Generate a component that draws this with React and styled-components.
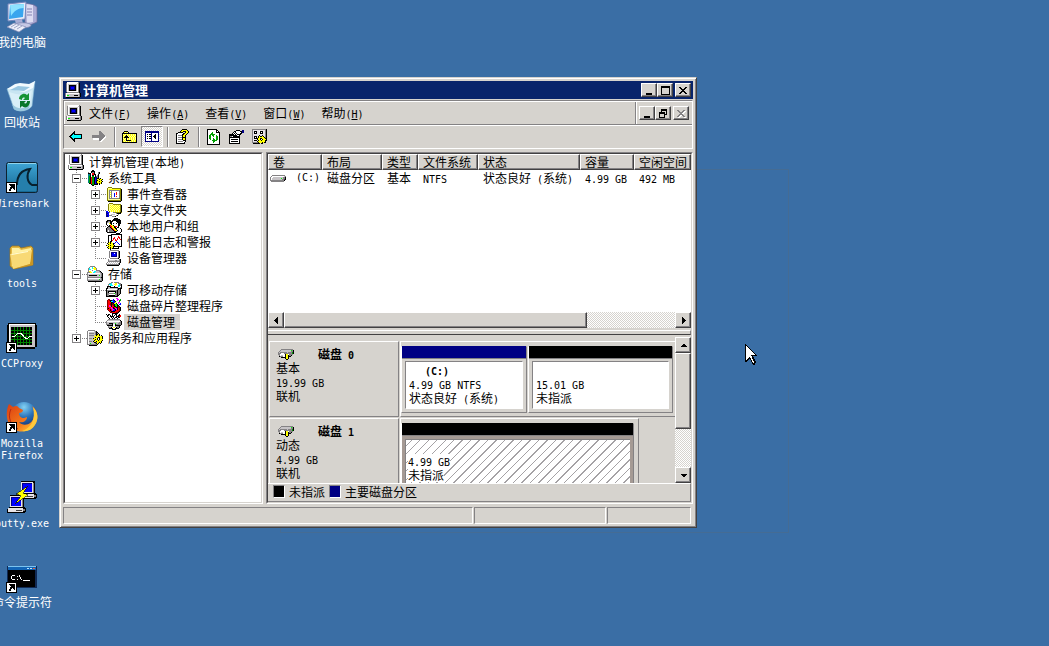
import React from "react";
import styled, { createGlobalStyle, css } from "styled-components";

const c = {
  face: "#d6d3ce",
  light: "#ffffff",
  shadow: "#848284",
  dark: "#424142",
  title: "#08246b",
  navy: "#000084",
  desk: "#3a6ea5",
};

const Global = createGlobalStyle`
  * { box-sizing: border-box; }
  body {
    margin: 0;
    background: ${c.desk};
    color: #000;
    font: 12px/16px "Noto Sans CJK SC", "Liberation Sans", sans-serif;
  }
  button { font: inherit; color: inherit; padding: 0; margin: 0; }
`;

const raised = css`
  border: 1px solid;
  border-color: ${c.light} ${c.dark} ${c.dark} ${c.light};
  box-shadow: inset -1px -1px 0 ${c.shadow};
`;
const sunken = css`
  border: 1px solid;
  border-color: ${c.shadow} ${c.light} ${c.light} ${c.shadow};
`;
const dither = css`
  background: repeating-conic-gradient(#fff 0 25%, ${c.face} 0 50%) 0 0 / 2px 2px;
`;

const Half = styled.span`
  font-family: "DejaVu Sans Mono", monospace;
  font-size: 10px;
  line-height: 0;
  white-space: pre;
`;

function T({ children }) {
  return children
    .split(/([\x20-\x7e]+)/)
    .filter(Boolean)
    .map((s, i) => (/^[\x20-\x7e]/.test(s) ? <Half key={i}>{s}</Half> : s));
}

/* ---------- pixel sprites ---------- */
const ink = {
  k: "#000", w: "#fff", g: "#848284", s: "#c6c3c6", l: "#e7e3e7", b: "#0000ff", n: "#000084",
  y: "#ffff00", Y: "#ffff9c", o: "#848200", c: "#00ffff", t: "#008284", r: "#ff0000",
  R: "#840000", e: "#00a000", G: "#00ff00", m: "#ff00ff", d: "#424142",
};

const Art = styled.svg`
  display: block;
  flex: none;
  overflow: visible;
`;

function Sprite({ rows }) {
  const rects = [];
  rows.forEach((row, y) => {
    let x = 0;
    while (x < row.length) {
      const ch = row[x];
      let n = 1;
      while (row[x + n] === ch) n += 1;
      if (ink[ch]) rects.push(<rect key={`${x}-${y}`} x={x} y={y} width={n} height="1" fill={ink[ch]} />);
      x += n;
    }
  });
  const w = Math.max(...rows.map((r) => r.length));
  return (
    <Art width={w} height={rows.length} shapeRendering="crispEdges" aria-hidden="true">
      {rects}
    </Art>
  );
}

const art = {
  computer: [
    "..wwwwwwwwwwwg..",
    ".gwwwwwwwwwwsgk.",
    ".gwssssssssswgk.",
    ".gwskkkkkkkswgk.",
    ".gwsknnnnnkswgk.",
    ".gwsknbbbnkswgk.",
    ".gwsknbbbnkswgk.",
    ".gwsknnnnnkswgk.",
    ".gwskkkkkkkswgk.",
    ".gwwwwwwwwwwwgk.",
    "..ggggggggggggk.",
    "gwwwwwwwwwwwwwgk",
    "gwssssssssssssgk",
    "gwGGssssskkkksgk",
    "gwssssssssssssgk",
    ".kkkkkkkkkkkkkk.",
  ],
  tools: [
    "..ww.kk.........",
    ".wwwkkkk..ww....",
    ".gw.kggk..wgk...",
    ".kkk.rrk.wwgk...",
    ".ttk.rrkkwwk....",
    ".ttk.kk.kwgk....",
    ".tek.ee.kggk....",
    ".tekreeknngk....",
    ".tekreekbnkkyk..",
    ".tekreekbnyykyyk",
    ".tekreekbnkyyyk.",
    ".tekreekbkyykyyk",
    ".tekreekbkyyyyk.",
    "..kkreekbnkykyk.",
    "....keekkkk.k...",
    ".....kk.........",
  ],
  events: [
    "................",
    "..oooo..........",
    ".oYYYYooooooooo.",
    ".oYyyyyyyyyyyyok",
    ".oYgggggggggggok",
    ".oYgwgwwwwwwwgok",
    ".oYgygwwwwrwwgok",
    ".oYgwgwwbwrwwgok",
    ".oYgygwwbwrwwgok",
    ".oYgwgwwbwwwwgok",
    ".oYgygwwbwrwwgok",
    ".oYgwgwwwwwwwgok",
    ".oYggggggggggook",
    ".oYYYYYYYYYYYYok",
    ".ooooooooooooook",
    "..kkkkkkkkkkkkk.",
  ],
  shared: [
    "................",
    "...oooo.........",
    "..oYYYYoooooooo.",
    "..oYyYyYyYyYyYok",
    "..oYYyYyYyYyYyok",
    "..oYyYyYyYyYyYok",
    "..oYYyYyYyYyYyok",
    "..oYyYyYyYyYyYok",
    "..oYYyYyYyYyYyok",
    "bb.oYyYyYyYyYyok",
    "nbbgwwwggoooooko",
    "nnbwwwwwwwgkkkk.",
    "nbbwwsssswwwg...",
    "nnbgggwwwwgk....",
    "nnb...gggk......",
    "................",
  ],
  users: [
    "........kkkk....",
    ".......kkkkkkk..",
    ".kkkk.kkkkkkkkk.",
    "kkggkkkwwwkkkkk.",
    "kgsskkwwwwwkkkk.",
    "kwwykkwkwwkwkkk.",
    "kwwwykwwwwwwkk..",
    ".kwkryykwwwwkk..",
    "..kkrryykrrwk...",
    ".kggkryykkwkk...",
    "kggggkryykkwwwk.",
    "kgggggkryykwwwwk",
    "kgwggggkryykwwwk",
    "kgwgggggkkkwwwwk",
    ".kkkkkkkkkwwwwk.",
    "..........kkkk..",
  ],
  perf: [
    ".....kkkkkkkkkkk",
    "..kkkkwwwwwwwwwk",
    "..kwwkwwwwwwrwwk",
    "..kwwkwwrwwwrrwk",
    "..kwwkwrrwwrwrwk",
    "..kwwkwrwrwrwwrk",
    "..kwwkrwwrrwwwwk",
    "..kwkkwwwwbwwwwk",
    "..kykywwwbwbwwwk",
    ".kyykyykbwwwbwwk",
    "..kyyyykwwwwwbwk",
    "kyyykyyykwwwwwwk",
    "..kyyyykkkkkkkkk",
    ".kyykyykwwwwk...",
    "..kykykkkkkkk...",
    "....k...........",
  ],
  devices: [
    "....ggggggggg...",
    "...gwwwwwwwwgk..",
    "...gwnnnnnnwgk..",
    "...gwnbbwbnwgk..",
    "...gwnbbbbnwgk..",
    "...gwnbbbbnwgk..",
    "...gwnnnnnnwgk..",
    "...gwwwwwwwwgk..",
    "....ggggggggk...",
    "..gwwwwwwwwwwgk.",
    "..gssssssggssgk.",
    "..ggggggggggggk.",
    ".gwswswswswswgk.",
    "gwswswswswswgk..",
    "gggggggggggggk..",
    ".kkkkkkkkkkkk...",
  ],
  storage: [
    "...ggggg........",
    "..gwwcwyg.......",
    ".gcwwcyyyg......",
    ".gccwwwyyg......",
    ".gwwwgwwwgggg...",
    ".gyywwwccsssgk..",
    "gggyywccsssssgk.",
    "gwwwwwwwwwwwwsgk",
    "gsssssssssssssgk",
    "gskkkkkkkkssGsgk",
    "gsssssssssssssgk",
    "ggggggggggggggkk",
    "gwwwwwwwwwwwwsgk",
    "gsssssssssssGsgk",
    "gggggggggggggggk",
    ".kkkkkkkkkkkkkk.",
  ],
  removable: [
    ".....ggwggggg...",
    "...ggcwwwyywggg.",
    "..gcccwwyyywwcgk",
    "..gwcccwwywwccgk",
    ".kkkkwwwkwwwccwk",
    ".ksskkkkkkkkwwgk",
    "kksssssssssgkkkk",
    "kwwwwwwwwwwgkgk.",
    "kggggggggggkggk.",
    "kgkkkkkkkkgkggk.",
    "kgkwwwwwwkgkggk.",
    "kgggggggGggkggk.",
    "kggwwwwwwggkgk..",
    "kggkkkkkkggkk...",
    "kkkkkkkkkkkk....",
    "................",
  ],
  defrag: [
    "..........mm....",
    "..RR...b...mm.e.",
    ".RrRkkbbk..m.ee.",
    ".RrrkccbbkY..e..",
    ".RrrrkkbbyY.mm..",
    ".RrrRkRkyyk.m.b.",
    ".RrrRkRRkGGk.bb.",
    ".RrmrkrRkGGkk...",
    ".RrmmkrrkkGkRk..",
    ".RrrrmrkrrkkRRk.",
    ".RkrrmmkkmmkrRk.",
    ".RrrkrmmbkmkrRk.",
    "..RrkrmbbkrrrRk.",
    "...RrkkkkrrrRk..",
    "....RRrrrrRRk...",
    "......kkkkkk....",
  ],
  diskmgmt: [
    "k.kk..k..kk..kww",
    "wkkwk.k.kwk.kkrw",
    ".kwwkkkkwwkkkrr.",
    "..kwwkwkwkkwkk..",
    "...kwwkwkwwk....",
    "..gggggggggggg..",
    ".gssssssssssssk.",
    "gwwwwwwwwwwwwwgk",
    "gssssssssssssggk",
    "gsskkkkssGssgggk",
    "ggggggkwwkgggggk",
    ".kkkkkkwwkkkkkk.",
    "..gsssgwwgsggk..",
    "..gggkwyywkggk..",
    "...kkkkwwkkkk...",
    "......kkkk......",
  ],
  services: [
    ".ggggggg........",
    "gwwwwwwsgk......",
    "gwssssssgkk.....",
    "gwgggggsgkgk....",
    "gwssssssgkkyk...",
    "gwgggggsykyyk.k.",
    "gwsssssyyyyyyyyk",
    "gwsssssskyykkyyk",
    "gwgggskyyyk.kyyk",
    "gwssssyykyk.kyyy",
    "gwssssskyyykyyyk",
    "gwgggskyykyyyyk.",
    "gwssssskkgyykyk.",
    "gwsGssssgkyk.k..",
    "ggggggggggk.....",
    "..kkkkkkkk......",
  ],
  drive: [
    "..ggggggggggggg.",
    ".gwwwwwwwwwwwwsg",
    "gwwssssssssssggk",
    "gwsssssssssGsggk",
    "gwssssssssssggdk",
    "ggggggggggggggk.",
    ".ggggggggggggg..",
  ],
  disk: [
    "...gggggggggggg.",
    "..gssssssssssGgk",
    ".gsssssssssssggk",
    "gsgggggggsggggek",
    "gggwwwggggggggek",
    "ggwwwwwkyywgggg.",
    ".gwsswwkyykggk..",
    ".kgggwwkyykkk...",
    "...kkkkkyyk.....",
    ".......kyyk.....",
    "........kk......",
  ],
  up: [
    "..kkkk..........",
    ".kyYyYk.........",
    "kkkkkkkkkkkkkkk.",
    "kYyYyYyYyYyYyYk.",
    "kyYykYyYyYyYyYk.",
    "kYykkkYyYyYyYyk.",
    "kykkkkkYyYyYyYk.",
    "kYyYkYyYyYyYyYk.",
    "kyYykYyYyYyYyYk.",
    "kYyYkkkkkyYyYyk.",
    "kyYyYyYyYyYyYyk.",
    "kkkkkkkkkkkkkkk.",
  ],
  pane: [
    "nnnnnnnnnnnnnn",
    "nnnnnnnnnnnnnn",
    "nwwwwwnwwwwwwn",
    "nwkwkknwwwkwwn",
    "nwwwwwnwwkkwwn",
    "nwkwkknwkkkwwn",
    "nwwwwwnwwkkwwn",
    "nwkwkknwwwkwwn",
    "nwwwwwnwwwwwwn",
    "nwwwwwnwwwwwwn",
    "nnnnnnnnnnnnnn",
  ],
  help: [
    "......kkkkk...",
    ".....kyyyyyk..",
    "....kyykkkyyk.",
    "..kkkkk..kyyk.",
    "kkwwwwwkkyyk..",
    "kwwwwwkkyyk...",
    "kwggggkyyk....",
    "kwwwwwkyyk....",
    "kwggggkkkk....",
    "kwwwwwkyyk....",
    "kwggggkyyk....",
    "kwwwwwwkkk....",
    "kwgggggwwk....",
    "kwwwwwwwk.....",
    "kkkkkkkkk.....",
  ],
  refresh: [
    "kkkkkkkkkk...",
    "kwwwwwwwwkk..",
    "kwwwwwwwwkwk.",
    "kwwwwewwwkkkk",
    "kwwweewwwwwwk",
    "kwweeeeewwwwk",
    "kweeweewwewwk",
    "kweewwewweewk",
    "kweewwwwweewk",
    "kweewwewweewk",
    "kwwewweeweewk",
    "kwwwweeeeewwk",
    "kwwwwweewwwwk",
    "kwwwwwewwwwwk",
    "kwwwwwwwwwwwk",
    "kkkkkkkkkkkkk",
  ],
  props: [
    ".......kkkk..nn",
    ".....kkwwwwkknn",
    "....kwkwwwwwknn",
    "...kwkwkwwwkk..",
    "kkkkkwkwkkkk...",
    "kkkkkkkkwwk....",
    "kggwkkkkkkk....",
    "kkkkkkkkkkk....",
    "kwwwwwwwwwk....",
    "kwkkkkkkkwk....",
    "kwwwwwwwwwk....",
    "kwkkkkkkkwk....",
    "kwwwwwwwwwk....",
    "kkkkkkkkkkk....",
  ],
  settings: [
    "ggggggggggggggk.",
    "gllllllllllllgk.",
    "glkkkllwkkkllgk.",
    "glkwklllkwkllgk.",
    "glkkklllkkkllgk.",
    "gllllllllllllgk.",
    "gllllllkllkllgk.",
    "glkkklkykkyklgk.",
    "glkwklkyyyyykgk.",
    "glkkkkyykkyyykk.",
    "gllllkyykwkyyyk.",
    "glkkklkyykyyykk.",
    "gllllkyyyyyyyk..",
    "ggggggkyyykykk..",
    ".kkkkkkk.kk.....",
  ],
};

/* ---------- desktop icons ---------- */
const Shortcut = () => (
  <g shapeRendering="crispEdges">
    <rect x="0" y="21" width="11" height="11" fill="#000" />
    <rect x="1" y="22" width="9" height="9" fill="#fff" />
    <path d="M3 23h6v6h-1v-1h-1v-1h-1v1h-1v2H3v-2h1v-2h1v-1h-1v-1H3z" fill="#000" />
  </g>
);

const Pc = () => (
  <Art width="32" height="32" aria-hidden="true">
    <path d="M19 2l9 2 3 2v15l-7 3-5-2z" fill="#a9a9d2" stroke="#6b6b9c" strokeWidth=".7" />
    <path d="M20 3l7 1v17l-6 1z" fill="#dcdcf2" />
    <path d="M21 8h5M21 11h5M21 14h5" stroke="#8080b0" />
    <path d="M2 3l18-2-1 17-17 2z" fill="#e9edfa" stroke="#7587bb" />
    <path d="M4 4l14-1-1 13-14 2z" fill="#39a5ee" />
    <path d="M4 4l14-1v4c-6 0-10 3-13 8z" fill="#8de3ff" />
    <path d="M9 19l7-1 1 5-7 1z" fill="#a8aed6" />
    <path d="M8 24c2-3 16-3 17 0s-15 5-17 0z" fill="#c6c9e6" stroke="#7780aa" strokeWidth=".7" />
    <path d="M1 26l7-4 12 4-7 5z" fill="#eceef9" stroke="#858db6" strokeWidth=".7" />
    <path d="M5 26l5-3M8 27l5-3M11 28l5-3" stroke="#a2a9c9" />
  </Art>
);

const Bin = () => (
  <Art width="32" height="32" aria-hidden="true">
    <path d="M1 8L14 4l10 2 5-6-3 25c-4 6-14 6-18 3z" fill="#c8e5f2" stroke="#80b2d0" strokeWidth=".6" />
    <path d="M1 8l8-5 5-1 9 1 6-3-2 7-9 4-9-2z" fill="#f2fbff" />
    <path d="M4 9l8-4 12 1-6 4z" fill="#98c7e2" />
    <path d="M3 11l7 2 8 1 8-5-2 15c-5 6-13 5-16 2z" fill="#d9eff8" />
    <path d="M6 23c5 6 15 5 18 0l-1 4c-4 4-12 4-15 1z" fill="#9ac8de" />
    <path d="M13 18c0-4 5-7 8-4l2-2v7h-6l2-2c-2-1-3 0-3 2z" fill="#159335" />
    <path d="M24 20c0 6-5 8-8 5l-2 2v-7h6l-2 2c2 1 3 0 3-2z" fill="#08772a" />
  </Art>
);

const Shark = () => (
  <Art width="32" height="32" aria-hidden="true">
    <defs>
      <linearGradient id="sea" x1="0" y1="0" x2="0" y2="1">
        <stop offset="0" stopColor="#3fa6d6" />
        <stop offset="1" stopColor="#156691" />
      </linearGradient>
    </defs>
    <rect x=".5" y="1.500" width="31" height="30" rx="2" fill="url(#sea)" stroke="#0d2230" />
    <path d="M2 2.500h28" stroke="#91d4ec" />
    <path d="M11 24c0-9 4-15 13-16-4 6-3 13 2 16h4v6H11z" fill="#257fac" />
    <path d="M11 24c0-9 4-15 13-16-4 6-3 13 2 16h5" fill="none" stroke="#07202e" strokeWidth="2" />
    <Shortcut />
  </Art>
);

const Folder = () => (
  <Art width="32" height="32" aria-hidden="true">
    <path d="M4 7l2-2h7l2 2 10-2 2 2v17L8 28l-4-3z" fill="#e4b842" stroke="#9b7420" strokeWidth=".8" />
    <path d="M6 7h7l2 2 10-2v14L6 25z" fill="#fff0a2" />
    <path d="M4 13l18-3 4-1-2 14L7 28z" fill="#f8d975" />
    <path d="M5 13l17-3v1L6 14z" fill="#fffbd2" />
    <path d="M7 28l17-5 2-13 1-2v16z" fill="#c99523" />
  </Art>
);

const Proxy = () => (
  <Art width="32" height="32" shapeRendering="crispEdges" aria-hidden="true">
    <path d="M2 2h28v2h1v22h-2v2H3v-2H1V4h1z" fill="#000" />
    <path d="M3 3h26v22H3z" fill="#fff" />
    <path d="M4 4h25v22H4z" fill="#c6c3c6" />
    <path d="M5 6h21v18H5z" fill="#000" />
    <path d="M8 6v18M11 6v18M14 6v18M17 6v18M20 6v18M23 6v18M5 9h21M5 12h21M5 15h21M5 18h21M5 21h21" stroke="#008200" />
    <path d="M6 15h3l3-3h3l3 4 3 2 3-3h2" fill="none" stroke="#fff" />
    <Shortcut />
  </Art>
);

const Firefox = () => (
  <Art width="32" height="32" aria-hidden="true">
    <defs>
      <radialGradient id="globe" cx=".5" cy=".2" r=".8">
        <stop offset="0" stopColor="#83d2f4" />
        <stop offset=".5" stopColor="#276fb7" />
        <stop offset="1" stopColor="#14306c" />
      </radialGradient>
      <linearGradient id="fur" x1="0" y1="0" x2="1" y2="1">
        <stop offset="0" stopColor="#d93c13" />
        <stop offset=".6" stopColor="#f57a19" />
        <stop offset="1" stopColor="#ffd53d" />
      </linearGradient>
    </defs>
    <circle cx="18" cy="14" r="13" fill="url(#globe)" />
    <path d="M3 3l4 3c3-2 5-1 6 1l4 2c0 2-2 3-4 3 0 3 2 5 5 5l3-1c0 4-4 6-8 5 4 5 14 3 15-6 1-4-1-8-2-10 7 5 7 15 1 21-7 7-20 6-24-3C0 17 0 9 3 3z" fill="url(#fur)" />
    <path d="M27 6c5 5 6 12 2 18-3 5-8 7-13 6 9-3 14-11 11-24z" fill="#ffc93a" />
    <path d="M5 8c-4 8 0 17 7 20" fill="none" stroke="#b52a13" />
    <Shortcut />
  </Art>
);

const Terminal = ({ x, y }) => (
  <g transform={`translate(${x} ${y})`}>
    <path d="M2 0h14l1 1v11h1l1 2v3l-2 1H0v-4l3-2V1z" fill="#000" />
    <path d="M3 1h12v11H3zM1 13h15v4H1z" fill="#e7e3e7" />
    <path d="M15 2h1v10h-1zM16 14h2v2h-2z" fill="#848284" />
    <path d="M4 2h10v9H4z" fill="#000084" />
    <path d="M5 3h9v8H5z" fill="#0000ff" />
    <path d="M9 15h6v1H9z" fill="#424142" />
  </g>
);

const Putty = () => (
  <Art width="32" height="32" shapeRendering="crispEdges" aria-hidden="true">
    <Terminal x="12" y="0" />
    <Terminal x="1" y="14" />
    <path d="M22 5l-12 8 5 2-6 8 13-9-5-2z" fill="#ff0" stroke="#000" strokeWidth=".6" />
  </Art>
);

const Cmd = () => (
  <Art width="32" height="32" shapeRendering="crispEdges" aria-hidden="true">
    <path d="M1 5h30v22H1z" fill="#102a55" />
    <path d="M2 5h28v4H2z" fill="#1264b5" />
    <path d="M2 5h28v1H2z" fill="#7bc3ef" />
    <path d="M21 7h2v1h-2zM24 7h2v1h-2z" fill="#b9e1ff" />
    <path d="M27 7h2v1h-2z" fill="#ef5d31" />
    <path d="M2 9h27v17H2z" fill="#000" />
    <path d="M6 14h3v1H6zM5 15h1v3H5zM6 18h3v1H6zM11 15h1v1h-1zM11 18h1v1h-1zM13 14h1v2h-1zM14 16h1v2h-1zM15 18h1v1h-1zM17 19h7v1h-7z" fill="#fff" />
    <Shortcut />
  </Art>
);

const Desktop = styled.main`
  position: relative;
  min-height: 100vh;
  overflow: hidden;
`;
const IconColumn = styled.nav`
  display: grid;
  grid-auto-rows: 80px;
  width: 88px;
  margin-left: -22px;
`;
const DesktopIcon = styled.button`
  display: flex;
  flex-direction: column;
  align-items: center;
  gap: 3px;
  padding-top: 1px;
  border: 0;
  background: none;
  color: #fff;
  line-height: 12px;
  text-align: center;
`;
const IconLabel = styled.span`
  display: block;
`;
const IconLine = styled.span`
  display: block;
`;

/* ---------- window ---------- */
const DragOutline = styled.div`
  position: absolute;
  left: 280px;
  top: 169px;
  width: 509px;
  height: 364px;
  border: 1px solid #456c94;
`;
const Frame = styled.section`
  position: absolute;
  left: 59px;
  top: 77px;
  width: 638px;
  padding: 3px;
  background: ${c.face};
  border: 1px solid;
  border-color: ${c.face} ${c.dark} ${c.dark} ${c.face};
  box-shadow: inset 1px 1px 0 ${c.light}, inset -1px -1px 0 ${c.shadow};
`;
const TitleBar = styled.header`
  display: flex;
  align-items: center;
  gap: 2px;
  height: 18px;
  padding: 0 2px;
  background: ${c.title};
  color: #fff;
`;
const TitleText = styled.h1`
  flex: 1;
  margin: 0;
  font-size: 13px;
  font-weight: 700;
  line-height: 16px;
`;
const Buttons = styled.div`
  display: flex;
  button:last-child { margin-left: 2px; }
`;
const CaptionButton = styled.button`
  ${raised}
  display: grid;
  place-items: center;
  width: 16px;
  height: 14px;
  background: ${c.face};
  color: ${(p) => (p.disabled ? c.shadow : "#000")};
`;
const Rebar = styled.div`
  margin-top: 1px;
  ${sunken}
`;
const MenuBar = styled.nav`
  display: flex;
  align-items: center;
  height: 23px;
  padding: 0 3px 0 1px;
  border-left: 1px solid ${c.light};
  border-top: 1px solid ${c.light};
`;
const Menus = styled.div`
  display: flex;
  flex: 1;
  gap: 16px;
  padding-left: 7px;
`;
const MenuButton = styled.button`
  border: 0;
  background: none;
  line-height: 16px;
`;
const MdiControls = styled.div`
  display: flex;
  align-items: center;
  align-self: stretch;
  padding-left: 3px;
  border-left: 1px solid ${c.shadow};
  box-shadow: inset 1px 0 0 ${c.light};
`;
const ToolBar = styled.div`
  display: flex;
  align-items: center;
  height: 24px;
  border-top: 1px solid ${c.shadow};
  box-shadow: inset 0 1px 0 ${c.light};
`;
const ToolButton = styled.button`
  display: grid;
  place-items: center;
  width: ${(p) => (p.$pressed ? 22 : 23)}px;
  height: 21px;
  border: 0;
  background: none;
  ${(p) => p.$pressed && css`${dither} ${sunken}`}
`;
const ToolSep = styled.span`
  width: 2px;
  height: 20px;
  margin: 0 2px 0 4px;
  border-left: 1px solid ${c.shadow};
  border-right: 1px solid ${c.light};
`;
const Body = styled.div`
  display: grid;
  grid-template-columns: 200px minmax(0, 1fr);
  gap: 3px;
  margin: 3px 0;
`;
const Inset = styled.div`
  min-width: 0;
  ${sunken}
`;
const InsetInner = styled.div`
  height: 100%;
  border: 1px solid;
  border-color: ${c.dark} ${c.face} ${c.face} ${c.dark};
  background: ${(p) => p.$bg};
`;

/* ---------- tree ---------- */
const TreeList = styled.ul`
  margin: 0;
  padding: 0 0 0 3px;
  list-style: none;
`;
const TreeRow = styled.li`
  display: flex;
  align-items: center;
  height: 16px;
`;
const Guide = styled.span`
  flex: none;
  width: 19px;
  height: 16px;
  background:
    ${(p) => (p.$v ? "repeating-linear-gradient(#848284 0 1px, transparent 1px 2px) 8px 0 / 1px" : "linear-gradient(transparent, transparent) 0 0 / 0")} ${(p) => (p.$v === "end" ? "8px" : "16px")} no-repeat,
    ${(p) => (p.$h ? "repeating-linear-gradient(90deg, #848284 0 1px, transparent 1px 2px) 8px 8px / 11px 1px" : "linear-gradient(transparent, transparent) 0 0 / 0 0")} no-repeat;
`;
const Expander = styled.button`
  display: block;
  width: 9px;
  height: 9px;
  margin: 4px 0 0 4px;
  border: 1px solid ${c.shadow};
  background: #fff;
  svg { margin: 1px; }
`;
const TreeLabel = styled.span`
  margin-left: 2px;
  padding: 0 5px 0 3px;
  line-height: 16px;
  white-space: nowrap;
  background: ${(p) => (p.$selected ? c.face : "none")};
`;

const Sign = ({ open }) => (
  <Art width="5" height="5" shapeRendering="crispEdges" aria-hidden="true">
    <path d={open ? "M0 2h5v1H0z" : "M0 2h5v1H0zM2 0h1v5H2z"} />
  </Art>
);

const tree = [
  { g: [], icon: "computer", text: "计算机管理(本地)" },
  { g: ["full"], box: "-", icon: "tools", text: "系统工具" },
  { g: ["full", "full"], box: "+", icon: "events", text: "事件查看器" },
  { g: ["full", "full"], box: "+", icon: "shared", text: "共享文件夹" },
  { g: ["full", "full"], box: "+", icon: "users", text: "本地用户和组" },
  { g: ["full", "full"], box: "+", icon: "perf", text: "性能日志和警报" },
  { g: ["full", "end"], icon: "devices", text: "设备管理器" },
  { g: ["full"], box: "-", icon: "storage", text: "存储" },
  { g: ["full", "full"], box: "+", icon: "removable", text: "可移动存储" },
  { g: ["full", "full"], icon: "defrag", text: "磁盘碎片整理程序" },
  { g: ["full", "end"], icon: "diskmgmt", text: "磁盘管理", selected: true },
  { g: ["end"], box: "+", icon: "services", text: "服务和应用程序" },
];

/* ---------- volume list ---------- */
const ListArea = styled.div`
  height: 158px;
  overflow: hidden;
  background: #fff;
`;
const Volumes = styled.table`
  width: 100%;
  table-layout: fixed;
  border-collapse: separate;
  border-spacing: 0;
  th, td {
    padding: 0 0 0 5px;
    text-align: left;
    font-weight: 400;
    line-height: 14px;
    white-space: nowrap;
    overflow: hidden;
  }
  th {
    ${raised}
    height: 16px;
    padding-left: 4px;
    background: ${c.face};
  }
  td { height: 16px; }
  td:first-child { padding-left: 2px; }
`;
const VolumeName = styled.span`
  display: flex;
  align-items: center;
  gap: 4px;
`;
const columns = [
  ["卷", 54], ["布局", 60], ["类型", 36], ["文件系统", 60], ["状态", 102], ["容量", 54], ["空闲空间"],
];
const Col = styled.col`
  width: ${(p) => (p.$w ? `${p.$w}px` : "auto")};
`;

/* ---------- scroll bars ---------- */
const Scroll = styled.div`
  display: flex;
  flex-direction: ${(p) => (p.$vertical ? "column" : "row")};
  flex: none;
  ${(p) => (p.$vertical ? "width: 16px;" : "height: 16px;")}
  ${dither}
`;
const ScrollButton = styled.button`
  ${raised}
  display: grid;
  place-items: center;
  flex: none;
  width: 16px;
  height: 16px;
  background: ${c.face};
`;
const Thumb = styled.div`
  ${raised}
  flex: 0 0 ${(p) => p.$size};
  background: ${c.face};
`;
const Fill = styled.div`
  flex: 1;
`;
const arrows = {
  left: "M5 0v7L1 4V3z",
  right: "M2 0v7l4-3V3z",
  up: "M0 5h7L4 2H3z",
  down: "M0 2h7L4 5H3z",
};
const Arrow = ({ to }) => (
  <Art width="7" height="7" shapeRendering="crispEdges" aria-hidden="true">
    <path d={arrows[to]} />
  </Art>
);

const Splitter = styled.div`
  height: 5px;
  margin: 2px 0;
  border-top: 1px solid ${c.light};
  border-bottom: 1px solid ${c.dark};
  border-right: 1px solid ${c.shadow};
`;

/* ---------- disk map ---------- */
const MapArea = styled.div`
  display: flex;
  height: 146px;
`;
const Disks = styled.div`
  display: flex;
  flex-direction: column;
  flex: 1;
  gap: 1px;
  min-width: 0;
  padding: 4px 0 0 1px;
  overflow: hidden;
`;
const Disk = styled.div`
  display: flex;
  flex: none;
  gap: 1px;
  height: 76px;
`;
const DiskInfo = styled.div`
  flex: none;
  width: 130px;
  padding: 5px 6px;
  border: 1px solid;
  border-color: ${c.light} ${c.shadow} ${c.shadow} ${c.light};
  line-height: 14px;
`;
const DiskName = styled.div`
  display: flex;
  align-items: center;
  gap: 24px;
  padding-left: 2px;
  font-weight: 700;
`;
const DiskParts = styled.div`
  display: flex;
  flex: ${(p) => (p.$open ? "1" : "none")};
  gap: 1px;
  padding: 4px ${(p) => (p.$open ? 2 : 4)}px 3px 0;
  border: solid;
  border-width: 1px ${(p) => (p.$open ? 0 : 1)}px 1px 1px;
  border-color: ${c.light} ${c.shadow} ${c.shadow} ${c.light};
`;
const Part = styled.div`
  display: flex;
  flex-direction: column;
  flex: ${(p) => (p.$w ? `0 0 ${p.$w}px` : "1")};
  border: 1px solid;
  border-color: transparent ${c.shadow} ${c.shadow} ${c.light};
`;
const Stripe = styled.div`
  flex: none;
  height: 13px;
  margin-top: -1px;
  background: ${(p) => p.$color};
  border-bottom: 1px solid ${c.shadow};
`;
const PartBox = styled.div`
  flex: 1;
  margin: ${(p) => (p.$selected ? "0" : "2px 3px 3px")};
  padding: ${(p) => (p.$selected ? "15px 3px 0" : "1px 3px 0")};
  border: ${(p) => (p.$selected ? "3px solid #a59a94" : "1px solid")};
  ${(p) => !p.$selected && `border-color: ${c.shadow} #fff #fff ${c.shadow};`}
  box-shadow: ${(p) => (p.$selected ? `inset 1px 1px 0 ${c.shadow}` : "none")};
  background: ${(p) => (p.$selected ? "repeating-linear-gradient(135deg, #fff 0 5px, #a5a2a5 5px 6px)" : "#fff")};
  line-height: 14px;
  white-space: nowrap;
`;
const PartLine = styled.div`
  width: max-content;
  height: 14px;
  background: #fff;
  font-weight: ${(p) => (p.$name ? 700 : 400)};
  padding-left: ${(p) => (p.$name ? 16 : 0)}px;
`;
const Legend = styled.div`
  display: flex;
  align-items: center;
  gap: 4px;
  height: 19px;
  padding: 0 0 2px 5px;
  line-height: 14px;
  border: solid;
  border-width: 1px 1px 1px 0;
  border-color: ${c.light} ${c.shadow} ${c.shadow};
`;
const Swatch = styled.span`
  width: 12px;
  height: 13px;
  border: 1px solid;
  border-color: ${c.shadow} ${c.light} ${c.light} ${c.shadow};
  background: ${(p) => p.$color};
`;
const StatusBar = styled.footer`
  display: grid;
  grid-template-columns: minmax(0, 1fr) 132px 84px;
  gap: 1px;
  height: 17px;
  padding-right: 2px;
`;
const StatusCell = styled.div`
  ${sunken}
`;
const Pointer = styled(Art)`
  position: absolute;
  left: 745px;
  top: 344px;
`;

const glyph = {
  min: "M2 7h6v2H2z",
  max: "M1 0h9v9H1zM2 2v6h7V2z",
  restore: "M3 0h6v6H7v3H1V3h2zM4 2v1h3v2h1V2zM2 5v3h4V5z",
  close: "M1 1h2v1h1v1h2V2h1V1h2v1H8v1H7v1H6v1h1v1h1v1h1v1H7V7H6V6H4v1H3v1H1V7h1V6h1V5h1V4H3V3H2V2H1z",
};
const Glyph = ({ name, label, disabled }) => (
  <CaptionButton aria-label={label} disabled={disabled}>
    <Art width="10" height="9" shapeRendering="crispEdges" aria-hidden="true">
      {disabled && <path d={glyph[name]} fill="#fff" transform="translate(1 1)" />}
      <path d={glyph[name]} fill="currentColor" fillRule="evenodd" />
    </Art>
  </CaptionButton>
);

const menus = [["文件", "F"], ["操作", "A"], ["查看", "V"], ["窗口", "W"], ["帮助", "H"]];

const desktopIcons = [
  [Pc, "我的电脑"], [Bin, "回收站"], [Shark, "Wireshark"], [Folder, "tools"],
  [Proxy, "CCProxy"], [Firefox, "Mozilla\nFirefox"], [Putty, "putty.exe"], [Cmd, "命令提示符"],
];

const NavArrow = ({ back }) => (
  <Art width="13" height="11" shapeRendering="crispEdges" aria-hidden="true">
    {back ? (
      <>
        <path d="M0 5l5-5h1v3h7v5H6v3H5L0 6z" fill="#000" />
        <path d="M2 5l3-3v2h7v3H5v2L2 6z" fill="#00ffff" />
      </>
    ) : (
      <>
        <path d="M14 6L9 11H8V9H1V5h7V1h1z" fill="#fff" />
        <path d="M13 5l-5 5H7V7H0V4h7V0h1z" fill={c.shadow} />
      </>
    )}
  </Art>
);

export default function App() {
  return (
    <Desktop>
      <Global />
      <IconColumn aria-label="桌面">
        {desktopIcons.map(([Icon, name]) => (
          <DesktopIcon key={name}>
            <Icon />
            <IconLabel>
              {name.split("\n").map((line) => (
                <IconLine key={line}><T>{line}</T></IconLine>
              ))}
            </IconLabel>
          </DesktopIcon>
        ))}
      </IconColumn>

      <DragOutline aria-hidden="true" />

      <Frame>
        <TitleBar>
          <Sprite rows={art.computer} />
          <TitleText>计算机管理</TitleText>
          <Buttons>
            <Glyph name="min" label="最小化" />
            <Glyph name="max" label="最大化" />
            <Glyph name="close" label="关闭" />
          </Buttons>
        </TitleBar>

        <Rebar>
          <MenuBar>
            <Sprite rows={art.computer} />
            <Menus>
              {menus.map(([name, key]) => (
                <MenuButton key={key}>
                  {name}<Half>(<u>{key}</u>)</Half>
                </MenuButton>
              ))}
            </Menus>
            <MdiControls>
              <Buttons>
                <Glyph name="min" label="最小化子窗口" />
                <Glyph name="restore" label="还原子窗口" />
                <Glyph name="close" label="关闭子窗口" disabled />
              </Buttons>
            </MdiControls>
          </MenuBar>
          <ToolBar>
            <ToolButton aria-label="后退"><NavArrow back /></ToolButton>
            <ToolButton aria-label="前进"><NavArrow /></ToolButton>
            <ToolSep />
            <ToolButton aria-label="向上"><Sprite rows={art.up} /></ToolButton>
            <ToolButton aria-label="显示控制台树" $pressed><Sprite rows={art.pane} /></ToolButton>
            <ToolSep />
            <ToolButton aria-label="帮助"><Sprite rows={art.help} /></ToolButton>
            <ToolSep />
            <ToolButton aria-label="刷新"><Sprite rows={art.refresh} /></ToolButton>
            <ToolButton aria-label="属性"><Sprite rows={art.props} /></ToolButton>
            <ToolButton aria-label="设置"><Sprite rows={art.settings} /></ToolButton>
          </ToolBar>
        </Rebar>

        <Body>
          <Inset>
            <InsetInner $bg="#fff">
              <TreeList>
                {tree.map((n) => (
                  <TreeRow key={n.text}>
                    {n.g.map((v, i) => {
                      const last = i === n.g.length - 1;
                      return (
                        <Guide key={i} $v={v} $h={last}>
                          {last && n.box && (
                            <Expander aria-label={n.box === "+" ? "展开" : "折叠"}>
                              <Sign open={n.box === "-"} />
                            </Expander>
                          )}
                        </Guide>
                      );
                    })}
                    <Sprite rows={art[n.icon]} />
                    <TreeLabel $selected={n.selected}><T>{n.text}</T></TreeLabel>
                  </TreeRow>
                ))}
              </TreeList>
            </InsetInner>
          </Inset>

          <Inset>
            <InsetInner $bg={c.face}>
              <ListArea>
                <Volumes>
                  <colgroup>
                    {columns.map(([name, w]) => <Col key={name} $w={w} />)}
                  </colgroup>
                  <thead>
                    <tr>{columns.map(([name]) => <th key={name}>{name}</th>)}</tr>
                  </thead>
                  <tbody>
                    <tr>
                      <td><VolumeName><Sprite rows={art.drive} /><Half> (C:)</Half></VolumeName></td>
                      <td>磁盘分区</td>
                      <td>基本</td>
                      <td><T>NTFS</T></td>
                      <td><T>状态良好 (系统)</T></td>
                      <td><T>4.99 GB</T></td>
                      <td><T>492 MB</T></td>
                    </tr>
                  </tbody>
                </Volumes>
              </ListArea>
              <Scroll>
                <ScrollButton aria-label="向左滚动"><Arrow to="left" /></ScrollButton>
                <Thumb $size="303px" />
                <Fill />
                <ScrollButton aria-label="向右滚动"><Arrow to="right" /></ScrollButton>
              </Scroll>
              <Splitter />
              <MapArea>
                <Disks>
                  <Disk>
                    <DiskInfo>
                      <DiskName><Sprite rows={art.disk} /><span><T>磁盘 0</T></span></DiskName>
                      <div>基本</div>
                      <div><T>19.99 GB</T></div>
                      <div>联机</div>
                    </DiskInfo>
                    <DiskParts $open>
                      <Part $w={126}>
                        <Stripe $color={c.navy} />
                        <PartBox>
                          <PartLine $name><T>(C:)</T></PartLine>
                          <PartLine><T>4.99 GB NTFS</T></PartLine>
                          <PartLine><T>状态良好 (系统)</T></PartLine>
                        </PartBox>
                      </Part>
                      <Part>
                        <Stripe $color="#000" />
                        <PartBox>
                          <PartLine />
                          <PartLine><T>15.01 GB</T></PartLine>
                          <PartLine>未指派</PartLine>
                        </PartBox>
                      </Part>
                    </DiskParts>
                  </Disk>
                  <Disk>
                    <DiskInfo>
                      <DiskName><Sprite rows={art.disk} /><span><T>磁盘 1</T></span></DiskName>
                      <div>动态</div>
                      <div><T>4.99 GB</T></div>
                      <div>联机</div>
                    </DiskInfo>
                    <DiskParts>
                      <Part $w={233}>
                        <Stripe $color="#000" />
                        <PartBox $selected>
                          <PartLine><T>4.99 GB</T></PartLine>
                          <PartLine>未指派</PartLine>
                        </PartBox>
                      </Part>
                    </DiskParts>
                  </Disk>
                </Disks>
                <Scroll $vertical>
                  <ScrollButton aria-label="向上滚动"><Arrow to="up" /></ScrollButton>
                  <Thumb $size="76px" />
                  <Fill />
                  <ScrollButton aria-label="向下滚动"><Arrow to="down" /></ScrollButton>
                </Scroll>
              </MapArea>
              <Legend>
                <Swatch $color="#000" />
                <span>未指派</span>
                <Swatch $color={c.navy} />
                <span>主要磁盘分区</span>
              </Legend>
            </InsetInner>
          </Inset>
        </Body>

        <StatusBar>
          <StatusCell />
          <StatusCell />
          <StatusCell />
        </StatusBar>
      </Frame>

      <Pointer width="12" height="21" shapeRendering="crispEdges" aria-hidden="true">
        <path d="M0 0l12 12H8l3 6-1 3H8l-3-6-4 3H0z" fill="#000" />
        <path d="M1 2l9 9H6l3 7v1H8l-3-6-4 3z" fill="#fff" />
      </Pointer>
    </Desktop>
  );
}
